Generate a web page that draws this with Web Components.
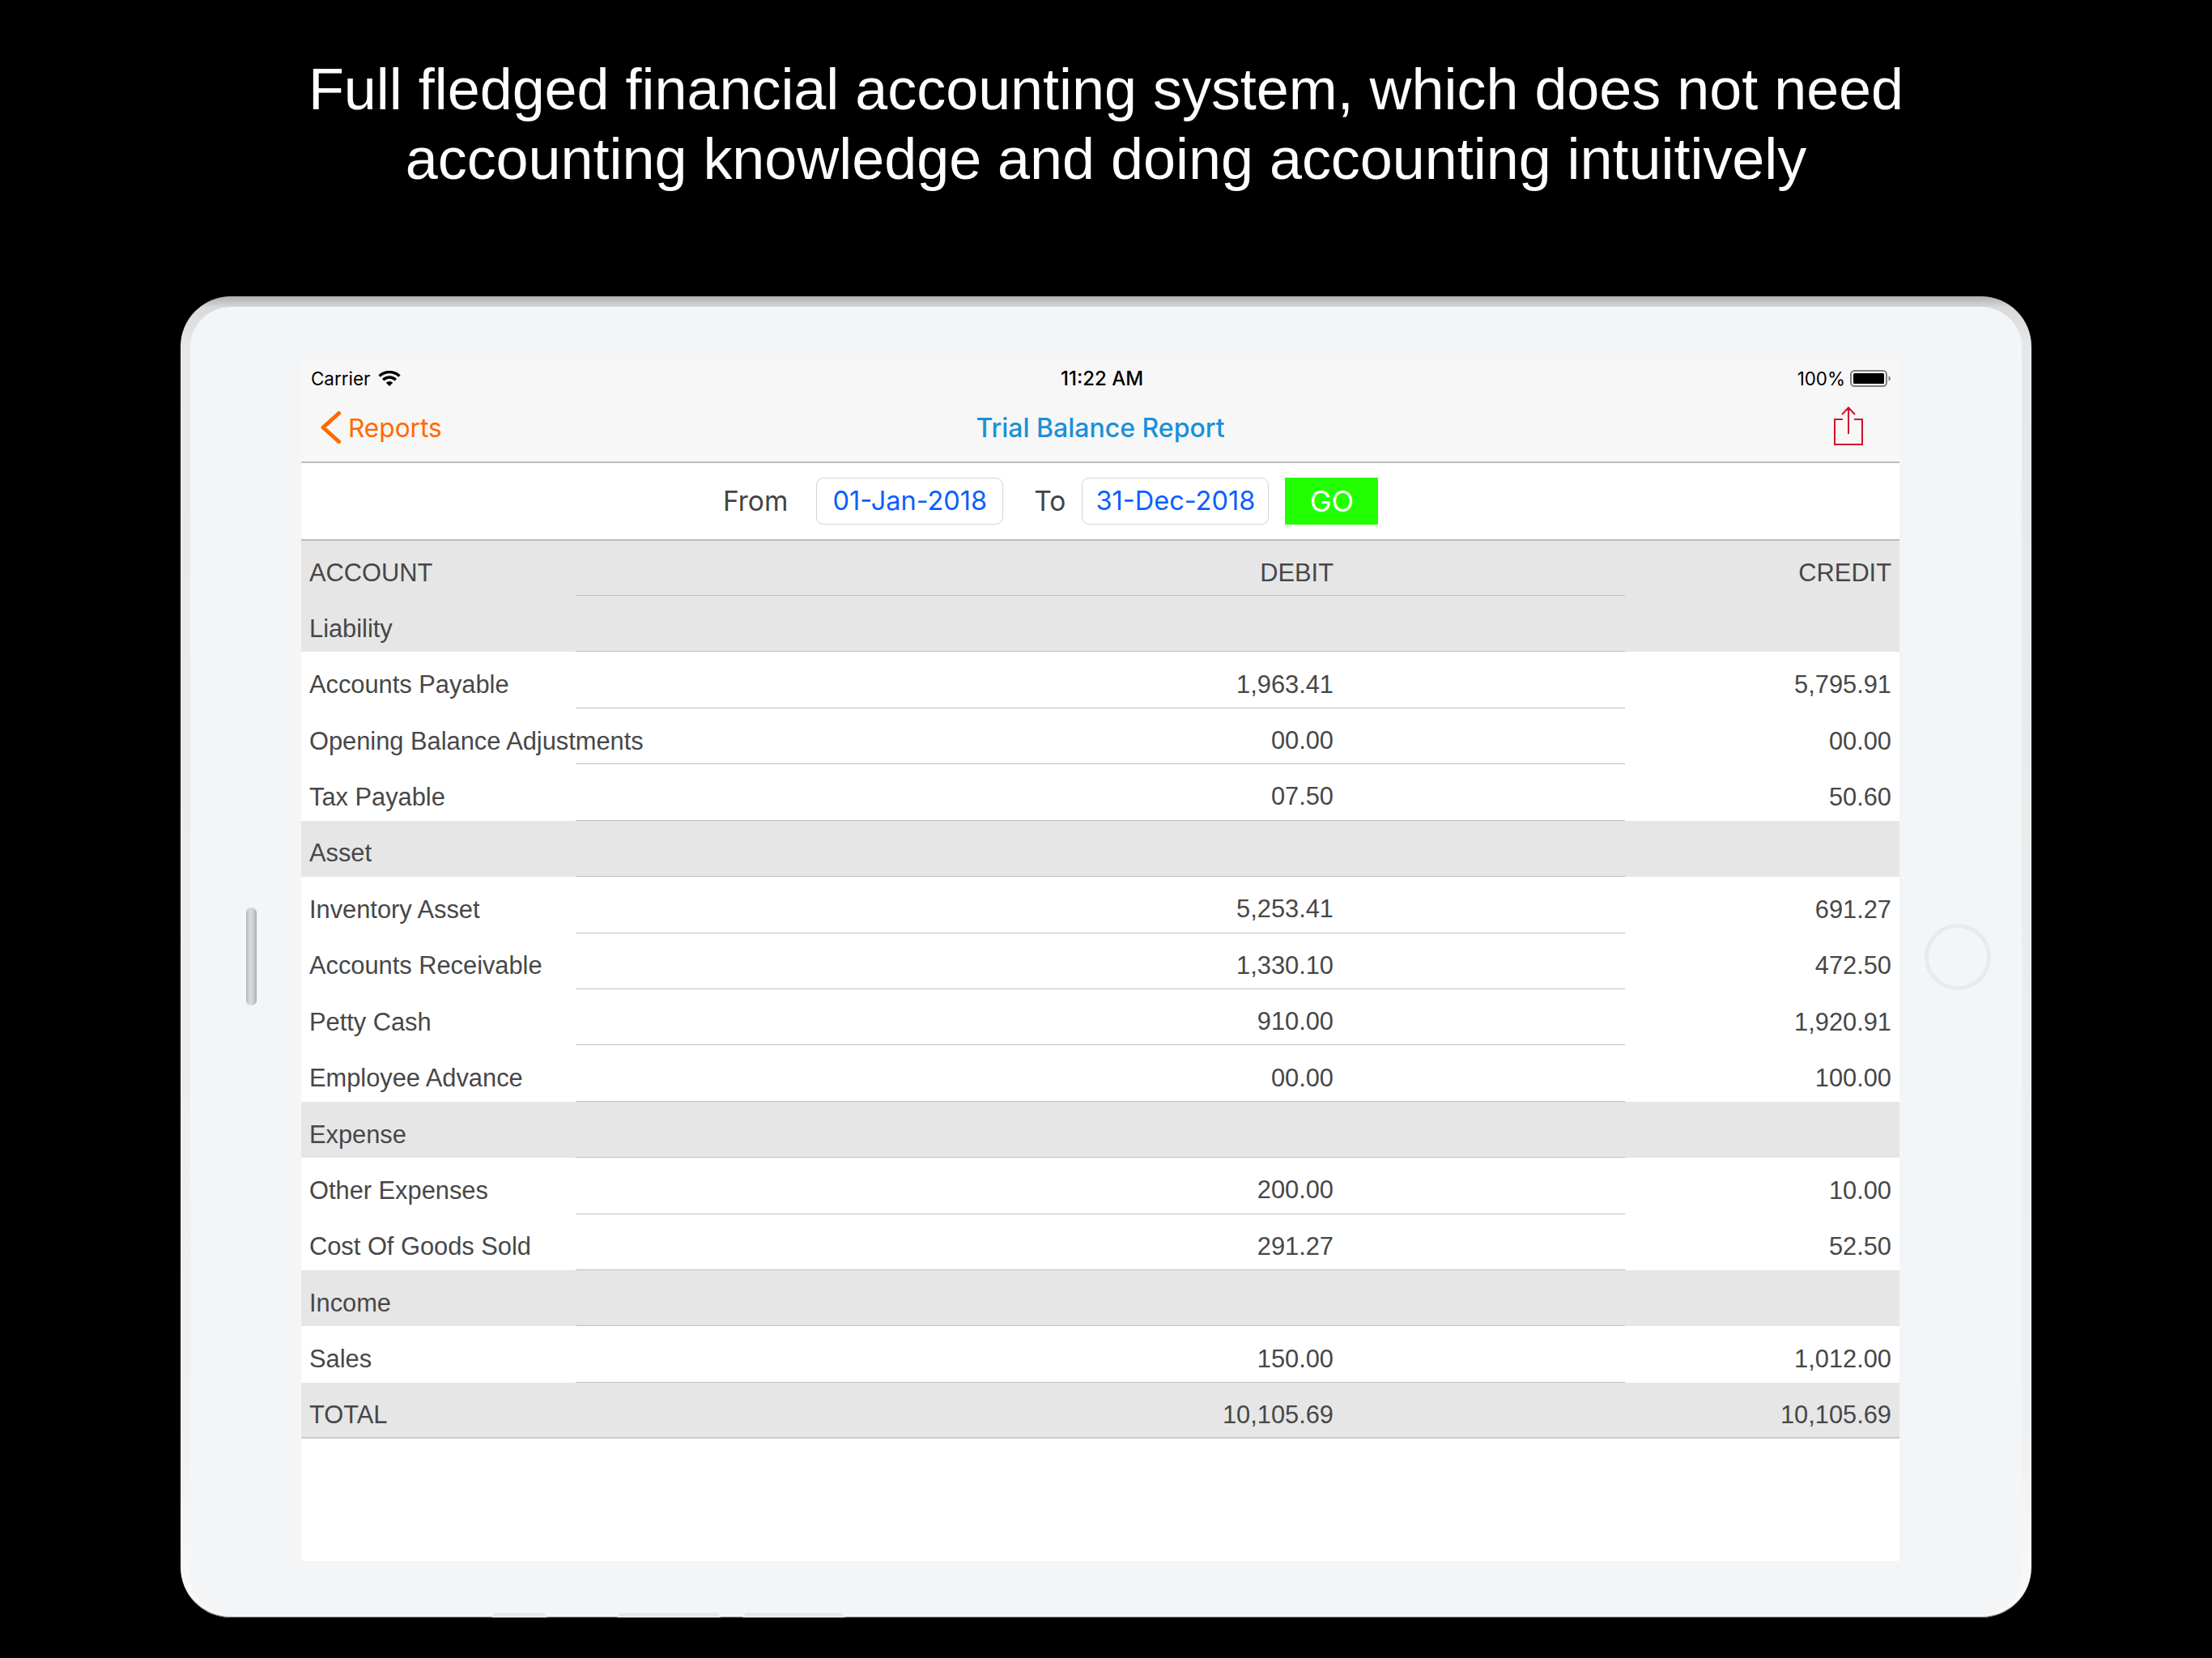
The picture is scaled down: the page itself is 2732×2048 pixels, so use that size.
<!DOCTYPE html>
<html lang="en">
  <head>
    <meta charset="utf-8" />
    <title>Trial Balance Report</title>
    <style>
      html,
      body {
        margin: 0;
        background: #000;
      }
      body {
        width: 2732px;
        height: 2048px;
        overflow: hidden;
        font-family: 'Liberation Sans', Arial, sans-serif;
      }
    </style>
  </head>

  <body>
    <promo-headline>
      Full fledged financial accounting system, which does not need<br />
      accounting knowledge and doing accounting intuitively
    </promo-headline>
    <tablet-frame>
      <status-bar></status-bar>
      <nav-bar title="Trial Balance Report" back="Reports"></nav-bar>
      <date-filter from="01-Jan-2018" to="31-Dec-2018"></date-filter>
      <report-table>
        <report-row kind="head">ACCOUNT<span slot="debit">DEBIT</span><span slot="credit">CREDIT</span></report-row>
        <report-row kind="head">Liability</report-row>
        <report-row>Accounts Payable<span slot="debit">1,963.41</span><span slot="credit">5,795.91</span></report-row>
        <report-row>Opening Balance Adjustments<span slot="debit">00.00</span><span slot="credit">00.00</span></report-row>
        <report-row>Tax Payable<span slot="debit">07.50</span><span slot="credit">50.60</span></report-row>
        <report-row kind="head">Asset</report-row>
        <report-row>Inventory Asset<span slot="debit">5,253.41</span><span slot="credit">691.27</span></report-row>
        <report-row>Accounts Receivable<span slot="debit">1,330.10</span><span slot="credit">472.50</span></report-row>
        <report-row>Petty Cash<span slot="debit">910.00</span><span slot="credit">1,920.91</span></report-row>
        <report-row>Employee Advance<span slot="debit">00.00</span><span slot="credit">100.00</span></report-row>
        <report-row kind="head">Expense</report-row>
        <report-row>Other Expenses<span slot="debit">200.00</span><span slot="credit">10.00</span></report-row>
        <report-row>Cost Of Goods Sold<span slot="debit">291.27</span><span slot="credit">52.50</span></report-row>
        <report-row kind="head">Income</report-row>
        <report-row>Sales<span slot="debit">150.00</span><span slot="credit">1,012.00</span></report-row>
        <report-row kind="total">TOTAL<span slot="debit">10,105.69</span><span slot="credit">10,105.69</span></report-row>
      </report-table>
    </tablet-frame>

    <template id="headline-template">
      <style>
        :host {
          display: block;
          height: 366px;
          box-sizing: border-box;
          padding-top: 67px;
          text-align: center;
          color: #fff;
          font: 71.9px/86px 'Liberation Sans', Arial, sans-serif;
        }
      </style>
      <slot></slot>
    </template>

    <template id="frame-template">
      <style>
        :host {
          display: block;
          box-sizing: border-box;
          width: 2286px;
          height: 1632px;
          margin-left: 223px;
          padding: 13px 12px 3px;
          border-radius: 62px;
          background: linear-gradient(#aeb0b0, #d9dadb 14px, #e6e7e8 60px, #eff0f1 1400px, #fafafa);
          box-shadow: inset 0 -2px 1px -1px #777;
        }
        .bezel {
          position: relative;
          display: grid;
          grid-template-columns: 137px 1974px 1fr;
          height: 100%;
          border-radius: 50px;
          background: #f4f5f7;
          padding-top: 68px;
          box-sizing: border-box;
        }
        .side {
          justify-self: start;
          align-self: start;
          width: 13px;
          height: 121px;
          margin: 674px 0 0 69px;
          border-radius: 7px;
          background: linear-gradient(90deg, #b3b6b9, #d9dcdf 35%, #ccd0d3 70%, #a9acaf);
        }
        .screen {
          height: 1481px;
          background: #fff;
          display: flex;
          flex-direction: column;
        }
        .home {
          justify-self: start;
          align-self: start;
          box-sizing: border-box;
          width: 82px;
          height: 82px;
          margin: 694px 0 0 31px;
          border: 5px solid #e9eaeb;
          border-radius: 50%;
        }
        /* little speaker tabs poking out of the bottom edge */
        .tab {
          position: absolute;
          bottom: -3px;
          height: 6px;
          background: #e6e7e8;
          clip-path: polygon(0 100%, 4px 0, calc(100% - 4px) 0, 100% 100%);
        }
      </style>
      <div class="bezel">
        <div class="side"></div>
        <div class="screen"><slot></slot></div>
        <div class="home"></div>
        <div class="tab" style="left: 372px; width: 69px"></div>
        <div class="tab" style="left: 527px; width: 128px"></div>
        <div class="tab" style="left: 682px; width: 127px"></div>
      </div>
    </template>

    <template id="status-template">
      <style>
        :host {
          display: grid;
          grid-template-columns: 1fr auto 1fr;
          align-items: center;
          height: 40px;
          padding: 0 11px 0 12px;
          background: #f7f7f7;
          color: #000;
          font: 22.4px Inter, sans-serif;
        }
        .left,
        .right {
          display: flex;
          align-items: center;
        }
        .left {
          gap: 10px;
        }
        .right {
          justify-content: flex-end;
          gap: 6px;
        }
        .time {
          font-weight: 500;
          font-size: 24px;
          margin-left: 3px;
        }
      </style>
      <div class="left">
        <span>Carrier</span>
        <svg width="28" height="19" viewBox="0 0 28 19">
          <g fill="none" stroke="#000" stroke-width="3.4">
            <path d="M1.63 6.63A17.5 17.5 0 0 1 26.37 6.63" />
            <path d="M6.22 11.22A11 11 0 0 1 21.78 11.22" />
          </g>
          <path d="M14 19L9.76 14.76A6 6 0 0 1 18.24 14.76Z" />
        </svg>
      </div>
      <span class="time">11:22 AM</span>
      <div class="right">
        <span>100%</span>
        <svg width="50" height="21" viewBox="0 0 50 21">
          <rect x="1" y="1" width="44" height="19" rx="4.5" fill="none" stroke="#808080" stroke-width="2" />
          <rect x="4" y="4" width="38" height="13" rx="1.5" />
          <path d="M47.5 7.5c1.5.4 2.5 1.5 2.5 3s-1 2.6-2.5 3z" fill="#808080" />
        </svg>
      </div>
    </template>

    <template id="nav-template">
      <style>
        :host {
          display: grid;
          grid-template-columns: 1fr auto 1fr;
          align-items: center;
          height: 85px;
          box-sizing: border-box;
          padding: 0 24px 1px;
          background: #f7f7f7;
          border-bottom: 2px solid #bcbcbc;
          font: 31.6px Inter, sans-serif;
        }
        .back {
          display: flex;
          align-items: center;
          gap: 9px;
          color: #ff6a00;
        }
        .title {
          color: #1a90d8;
          font-weight: 500;
          font-size: 32px;
        }
        svg {
          display: block;
        }
        .share {
          justify-self: end;
          margin: -5px 21px 0 0;
        }
      </style>
      <div class="back">
        <svg width="25" height="40" viewBox="0 0 25 40">
          <path d="M22.5 2.5L3 20l19.5 17.5" fill="none" stroke="#ff6a00" stroke-width="5" stroke-linecap="round" stroke-linejoin="round" />
        </svg>
        <span id="back"></span>
      </div>
      <span class="title" id="title"></span>
      <svg class="share" width="36" height="48" viewBox="0 0 36 48">
        <path d="M11 16H1v31h34V16H25M18 34V1.5M10 10l8-8.5 8 8.5" fill="none" stroke="#d0112b" stroke-width="2" />
      </svg>
    </template>

    <template id="filter-template">
      <style>
        :host {
          display: flex;
          align-items: center;
          height: 96px;
          box-sizing: border-box;
          padding: 0 0 1px 521px;
          background: #fff;
          border-bottom: 2px solid #bcbcbc;
          color: #444;
          font: 33.5px Inter, sans-serif;
        }
        .box {
          display: flex;
          align-items: center;
          justify-content: center;
          box-sizing: border-box;
          width: 231px;
          height: 58px;
          border: 1.5px solid #d4d4d4;
          border-radius: 9px;
          color: #0a60ff;
          font-size: 32.5px;
        }
        .from {
          margin-right: 35px;
        }
        .to {
          margin: 0 20px 0 38px;
        }
        .go {
          display: flex;
          align-items: center;
          justify-content: center;
          width: 115px;
          height: 58px;
          margin-left: 20px;
          background: #22ff00;
          color: #fff;
          font-size: 36px;
        }
      </style>
      <span class="from">From</span>
      <span class="box" id="from"></span>
      <span class="to">To</span>
      <span class="box" id="to"></span>
      <span class="go">GO</span>
    </template>

    <template id="table-template">
      <style>
        :host {
          display: grid;
          grid-template-rows: 68px repeat(15, 69.43px);
          font: 30.8px 'Liberation Sans', Arial, sans-serif;
          color: #474747;
        }
      </style>
      <slot></slot>
    </template>

    <template id="row-template">
      <style>
        :host {
          display: grid;
          grid-template-columns: 339px 1296px 339px;
          align-items: stretch;
          white-space: nowrap;
          box-sizing: border-box;
        }
        :host([kind='head']),
        :host([kind='total']) {
          background: #e6e6e6;
        }
        :host([kind='total']) {
          border-bottom: 2px solid #cccccc;
        }
        div {
          display: flex;
          align-items: center;
          padding-top: 12px;
          box-sizing: border-box;
        }
        .account {
          padding-left: 10px;
        }
        .debit {
          justify-content: flex-end;
          padding-right: 360px;
          border-bottom: 1.5px solid #bfbfbf;
        }
        :host([kind='total']) .debit {
          border-bottom: 0;
        }
        .credit {
          justify-content: flex-end;
          padding-right: 10px;
        }
      </style>
      <div class="account"><slot></slot></div>
      <div class="debit"><slot name="debit"></slot></div>
      <div class="credit"><slot name="credit"></slot></div>
    </template>

    <script type="module">
      function plain(name, templateId, setup) {
        const template = document.querySelector(templateId);
        customElements.define(
          name,
          class extends HTMLElement {
            constructor() {
              super();
              this.attachShadow({mode: 'open'}).appendChild(
                template.content.cloneNode(true)
              );
            }

            connectedCallback() {
              if (setup) {
                setup(this);
              }
            }
          }
        );
      }

      plain('promo-headline', '#headline-template');
      plain('tablet-frame', '#frame-template');
      plain('status-bar', '#status-template');
      plain('nav-bar', '#nav-template', (el) => {
        el.shadowRoot.querySelector('#title').textContent = el.getAttribute('title');
        el.shadowRoot.querySelector('#back').textContent = el.getAttribute('back');
      });
      plain('date-filter', '#filter-template', (el) => {
        el.shadowRoot.querySelector('#from').textContent = el.getAttribute('from');
        el.shadowRoot.querySelector('#to').textContent = el.getAttribute('to');
      });
      plain('report-table', '#table-template');
      plain('report-row', '#row-template');
    </script>
  </body>
</html>
